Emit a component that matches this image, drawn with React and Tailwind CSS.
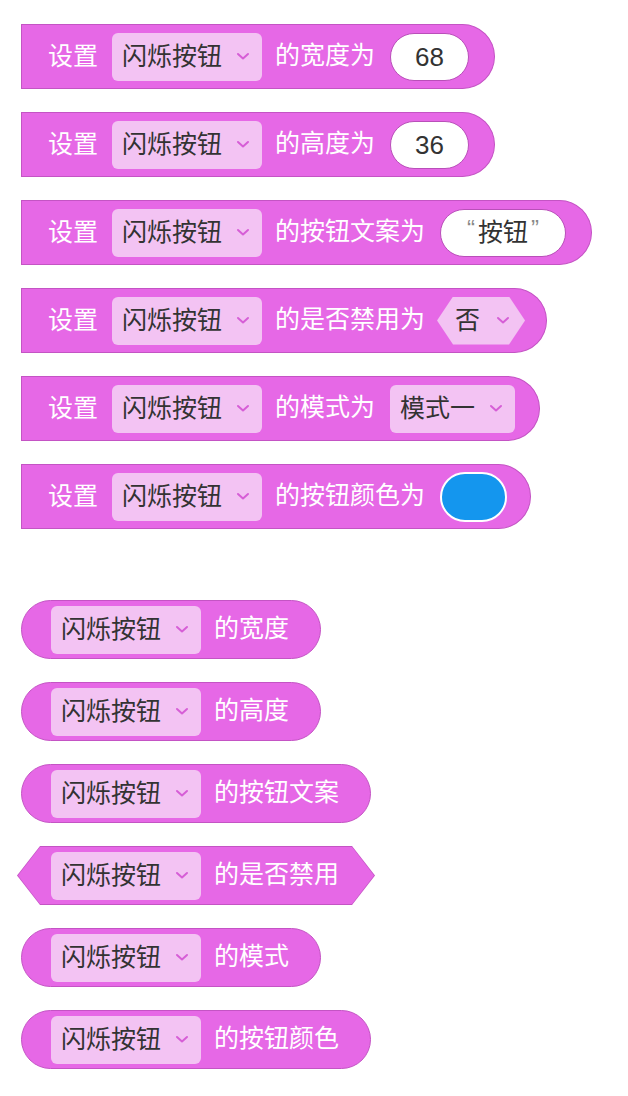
import React from 'react';

const FONT = '[font-family:"Liberation_Sans","Noto_Sans_CJK_SC",sans-serif]';

const Chevron = () => (
    <svg width="14" height="9" viewBox="0 0 14 9" className="shrink-0">
        <path d="M2 2 L7 6.5 L12 2" fill="none" stroke="#d65ed6" strokeWidth="2" strokeLinecap="round" strokeLinejoin="round" />
    </svg>
);

const Dropdown = ({ label }) => (
    <div className="flex items-center h-[48px] rounded-[6px] bg-[#f3c3f3] pl-[10px] pr-[12px] gap-[14px]">
        <span className="text-[25px] leading-none text-[#333]">{label}</span>
        <Chevron />
    </div>
);

const Label = ({ children }) => (
    <span className="text-[25px] leading-none text-white">{children}</span>
);

const NumberInput = ({ value }) => (
    <div className="flex items-center justify-center w-[79px] h-[48px] rounded-full bg-white border border-[#b94fb9] text-[26px] leading-none text-[#333]">
        {value}
    </div>
);

const StringInput = ({ value }) => (
    <div className="flex items-center justify-center w-[126px] h-[48px] rounded-full bg-white border border-[#b94fb9] text-[#333]">
        <span className="text-[24px] leading-none text-[#8a8a8a] self-start mt-[7px] mr-[3px]">“</span>
        <span className="text-[25px] leading-none">{value}</span>
        <span className="text-[24px] leading-none text-[#8a8a8a] self-start mt-[7px] ml-[3px]">”</span>
    </div>
);

const BoolDropdown = ({ label }) => (
    <div className="relative w-[88px] h-[48px] shrink-0 -ml-[3px]">
        <div className="absolute inset-0 bg-[#f3c3f3] [clip-path:polygon(0_50%,16px_0,calc(100%_-_16px)_0,100%_50%,calc(100%_-_16px)_100%,16px_100%)]" />
        <div className="relative flex items-center h-full pl-[18px] gap-[16px]">
            <span className="text-[25px] leading-none text-[#333]">{label}</span>
            <Chevron />
        </div>
    </div>
);

const ColorInput = () => (
    <div className="w-[67px] h-[50px] rounded-full bg-[#1496ee] border-2 border-white" />
);

const CommandBlock = ({ label, children, tail = 'pr-[25px]' }) => (
    <div className={`flex items-center w-fit h-[65px] rounded-l-[4px] rounded-r-full border border-[#c454c4] bg-[#e668e6] pl-[26px] ${tail}`}>
        <Label>设置</Label>
        <div className="ml-[14px]">
            <Dropdown label="闪烁按钮" />
        </div>
        <div className="ml-[13px] mr-[15px]">
            <Label>{label}</Label>
        </div>
        {children}
    </div>
);

const ReporterBlock = ({ label }) => (
    <div className="flex items-center w-fit h-[59px] rounded-full border border-[#c454c4] bg-[#e668e6] pl-[29px] pr-[31px]">
        <Dropdown label="闪烁按钮" />
        <div className="ml-[13px]">
            <Label>{label}</Label>
        </div>
    </div>
);

const BooleanBlock = ({ label }) => (
    <div className="relative w-fit h-[59px] -ml-[4px]">
        <div className="absolute inset-0 bg-[#c454c4] [clip-path:polygon(0_50%,23px_0,calc(100%_-_23px)_0,100%_50%,calc(100%_-_23px)_100%,23px_100%)]" />
        <div className="absolute inset-[1px] bg-[#e668e6] [clip-path:polygon(0_50%,22px_0,calc(100%_-_22px)_0,100%_50%,calc(100%_-_22px)_100%,22px_100%)]" />
        <div className="relative flex items-center h-full pl-[34px] pr-[36px]">
            <Dropdown label="闪烁按钮" />
            <div className="ml-[13px]">
                <Label>{label}</Label>
            </div>
        </div>
    </div>
);

export default function App() {
    return (
        <div className={`min-h-[1096px] bg-white pl-[21px] pt-[24px] ${FONT}`}>
            {/* Setters */}
            <div className="flex flex-col gap-[23px]">
                <CommandBlock label="的宽度为">
                    <NumberInput value="68" />
                </CommandBlock>
                <CommandBlock label="的高度为">
                    <NumberInput value="36" />
                </CommandBlock>
                <CommandBlock label="的按钮文案为">
                    <StringInput value="按钮" />
                </CommandBlock>
                <CommandBlock label="的是否禁用为" tail="pr-[21px]">
                    <BoolDropdown label="否" />
                </CommandBlock>
                <CommandBlock label="的模式为" tail="pr-[24px]">
                    <Dropdown label="模式一" />
                </CommandBlock>
                <CommandBlock label="的按钮颜色为" tail="pr-[23px]">
                    <ColorInput />
                </CommandBlock>
            </div>

            {/* Getters */}
            <div className="flex flex-col gap-[23px] mt-[71px]">
                <ReporterBlock label="的宽度" />
                <ReporterBlock label="的高度" />
                <ReporterBlock label="的按钮文案" />
                <BooleanBlock label="的是否禁用" />
                <ReporterBlock label="的模式" />
                <ReporterBlock label="的按钮颜色" />
            </div>
        </div>
    );
}
